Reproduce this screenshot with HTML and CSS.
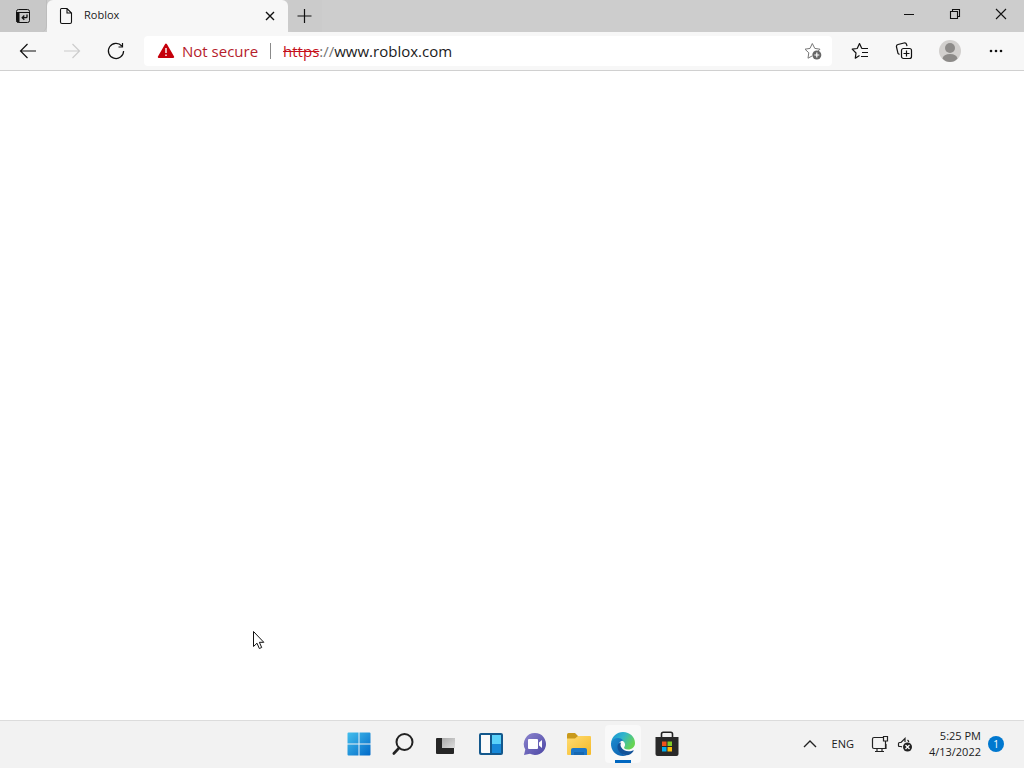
FILE: index.html
```html
<!DOCTYPE html>
<html lang="en">
<head>
<meta charset="utf-8">
<title>Roblox</title>
<link rel="stylesheet" href="styles.css">
</head>
<body>
<div class="desktop">
  <header class="titlebar">
    <button class="tab-actions" aria-label="Tab actions">
      <svg width="16" height="16" viewBox="0 0 16 16" fill="none" stroke="#111"><rect x="1.5" y="1.5" width="13" height="13" rx="2"/><path d="M1.500 4.500h13"/><path d="M2 5h2v9H2z" fill="#111"/><path d="M12 6.500v2.200q0 1-1 1H7.500M9.300 7.500 7.200 9.700l2.100 2" stroke-width="1.300"/></svg>
    </button>
    <div class="tab">
      <svg width="14" height="18" viewBox="0 0 14 18" fill="none" stroke="#111" stroke-width="1.100"><path d="M2.500 1.500h5.500l4.500 4.500v9q0 1.500-1.500 1.500H3q-1.500 0-1.500-1.500V3q0-1.500 1-1.500zM8 1.500V6h4.500"/></svg>
      <span class="tab-title">Roblox</span>
      <button class="tab-close" aria-label="Close tab"><svg width="10" height="10" viewBox="0 0 10 10" stroke="#111" stroke-width="1.400"><path d="M1 1l8 8M9 1 1 9"/></svg></button>
    </div>
    <button class="new-tab" aria-label="New tab"><svg width="16" height="16" viewBox="0 0 16 16" stroke="#111" stroke-width="1.200"><path d="M7.500 1v14M.5 8h14"/></svg></button>
    <div class="window-controls">
      <button aria-label="Minimize"><svg width="12" height="12" viewBox="0 0 12 12" stroke="#111"><path d="M1 6.500h10"/></svg></button>
      <button aria-label="Restore"><svg width="12" height="12" viewBox="0 0 12 12" fill="none" stroke="#111" stroke-width="1.100"><path d="M1.500 3.500h7v7h-7zM3.500 3.500v-2h7v7h-2"/></svg></button>
      <button aria-label="Close"><svg width="12" height="12" viewBox="0 0 12 12" stroke="#111" stroke-width="1.100"><path d="M1 1l10 10M11 1 1 11"/></svg></button>
    </div>
  </header>

  <nav class="toolbar" aria-label="Browser">
    <button class="tool" aria-label="Back"><svg width="20" height="20" viewBox="0 0 20 20" fill="none" stroke="#111" stroke-width="1.200"><path d="M18 10H2.500M9.500 3l-7 7 7 7"/></svg></button>
    <button class="tool" aria-label="Forward" disabled><svg width="20" height="20" viewBox="0 0 20 20" fill="none" stroke="#ccc" stroke-width="1.200"><path d="M2 10h15.500M10.500 3l7 7-7 7"/></svg></button>
    <button class="tool" aria-label="Refresh"><svg width="20" height="20" viewBox="0 0 20 20" fill="none" stroke="#111" stroke-width="1.200"><path d="M15.800 5A7.600 7.600 0 1 0 17.600 10M16.500 2v4h-4"/></svg></button>
    <div class="address">
      <button class="security"><svg width="18" height="16" viewBox="0 0 18 16"><path d="M9 1.500 16.200 14H1.800z" fill="#c5000b" stroke="#c5000b" stroke-width="2" stroke-linejoin="round"/><path d="M9 5v5M9 11.500v1.500" stroke="#fff" stroke-width="1.400"/></svg><span>Not secure</span></button>
      <span class="divider"></span>
      <label class="scheme" for="url"><s>https</s>://</label>
      <input id="url" class="url" type="text" value="www.roblox.com">
      <button class="favorite" aria-label="Add to favorites"><svg width="18" height="18" viewBox="0 0 18 18" fill="none" stroke="#777"><path d="M8 14 4 16.200l.8-5.400L1 7.200l5-.8L8.300 1.500l2.500 4.900 5.200.8-2 2" stroke-linejoin="round"/><circle cx="12.800" cy="13" r="4.500" fill="#666" stroke="none"/><path d="M12.800 10.500v5M10.300 13h5" stroke="#fff" stroke-width="1.200"/></svg></button>
    </div>
    <button class="tool" aria-label="Favorites"><svg width="18" height="18" viewBox="0 0 18 18" fill="none" stroke="#111" stroke-width="1.200"><path d="M8.500 13.500 4.300 16.200l.7-5.200L1.200 7.200l5-.7L8.500 1.500l2.200 4.700M10.500 6.500H17M11 10.500h6M10 14.500h7" stroke-linejoin="round"/></svg></button>
    <button class="tool" aria-label="Collections"><svg width="18" height="18" viewBox="0 0 18 18" fill="none" stroke="#111" stroke-width="1.200"><rect x="6.500" y="6.500" width="10" height="10" rx="2"/><path d="M11.500 8.500v6M8.500 11.500h6M4.500 12.500 3 11.500 1.500 5q-.4-2 1.500-2.500l6-1.500q2-.4 2.500 1.200l.5 2"/></svg></button>
    <button class="tool profile" aria-label="Profile"><svg width="22" height="22" viewBox="0 0 22 22"><circle cx="11" cy="11" r="11" fill="#d2d0ce"/><circle cx="11" cy="8" r="5" fill="#8d8b89"/><path d="M3.500 18.500q1-4.500 7.500-4.500t7.500 4.500Q15.500 22 11 22t-7.500-3.500" fill="#8d8b89"/></svg></button>
    <button class="tool menu" aria-label="Settings and more"><svg width="14" height="4" viewBox="0 0 14 4" fill="#111"><circle cx="2" cy="2" r="1.300"/><circle cx="7" cy="2" r="1.300"/><circle cx="12" cy="2" r="1.300"/></svg></button>
  </nav>

  <main class="page"></main>

  <footer class="taskbar">
    <div class="apps">
      <button class="app" aria-label="Start"><svg width="24" height="24" viewBox="0 0 24 24"><defs><linearGradient id="win" gradientUnits="userSpaceOnUse" x1="0" y1="0" x2="24" y2="24"><stop stop-color="#45c1ee"/><stop offset="1" stop-color="#0067c7"/></linearGradient></defs><path d="M1.500.5h10v11H.5v-10q0-1 1-1zM12.500.5h10q1 0 1 1v10h-11zM.5 12.500h11v11h-10q-1 0-1-1zM12.500 12.500h11v10q0 1-1 1h-10z" fill="url(#win)"/></svg></button>
      <button class="app" aria-label="Search"><svg width="24" height="24" viewBox="0 0 24 24" fill="none" stroke="#222"><circle cx="13.500" cy="10" r="8" stroke-width="2"/><path d="M8 16 2.800 21.500" stroke-width="2.600" stroke-linecap="round"/></svg></button>
      <button class="app" aria-label="Task view"><svg width="24" height="24" viewBox="0 0 24 24"><defs><linearGradient id="tv" x2="1" y2="1"><stop stop-color="#aaa"/><stop offset="1" stop-color="#ddd"/></linearGradient></defs><rect x="1" y="6" width="18" height="16" rx="1" fill="#262626"/><path d="M7 6h13v10H7z" fill="url(#tv)"/></svg></button>
      <button class="app" aria-label="Widgets"><svg width="24" height="24" viewBox="0 0 24 24"><rect width="24" height="22" y="1" rx="2" fill="#14588c"/><path d="M2 3h9v18H3q-1 0-1-1z" fill="#fafafa"/><path d="M13 3h9v9h-9z" fill="#5bd2fa"/><path d="M13 12h9v9h-9z" fill="#1788d8"/></svg></button>
      <button class="app" aria-label="Chat"><svg width="24" height="24" viewBox="0 0 24 24"><defs><linearGradient id="chat" x2="1" y2="1"><stop stop-color="#8d85ce"/><stop offset="1" stop-color="#4b46a4"/></linearGradient></defs><path d="M12 1a11 11 0 1 1-5 20.800L1 23l1.300-5.500A11 11 0 0 1 12 1z" fill="url(#chat)"/><rect x="5" y="7" width="10" height="10" rx="1" fill="#fff"/><path d="m16 10.500 3-2.500v8l-3-2.500z" fill="#fff"/></svg></button>
      <button class="app" aria-label="File Explorer"><svg width="24" height="24" viewBox="0 0 24 24"><defs><linearGradient id="fold" x2="1" y2="1"><stop stop-color="#ffdc72"/><stop offset="1" stop-color="#f5b927"/></linearGradient></defs><path d="M0 2.500Q0 1 1.500 1H8l3 3v3H0z" fill="#c99a1c"/><path d="M0 6.500h8L11 4h12q1 0 1 1v17q0 1-1 1H1q-1 0-1-1z" fill="url(#fold)"/><path d="M4 23v-5q0-2 2-2h12q2 0 2 2v5z" fill="#1c77c8"/><path d="M7 20h10v3H7z" fill="#1767b0"/></svg></button>
      <button class="app active" aria-label="Microsoft Edge"><svg width="26" height="26" viewBox="0 0 26 26"><defs><linearGradient id="edge" x2="1" y2=".5"><stop stop-color="#168fd4"/><stop offset=".5" stop-color="#31b5cb"/><stop offset="1" stop-color="#67d453"/></linearGradient><linearGradient id="wave" y2="1"><stop stop-color="#1c8cd0"/><stop offset="1" stop-color="#0b5cac"/></linearGradient></defs><path d="M1 12C2 5 7 1 13 1c7 0 12 5 12 11 0 4-3 6.500-7 6.500-3 0-4.500-1.200-3.800-2.300 1.400-2 1.100-4.200-.7-5.700C10 7.500 4 8 1 12z" fill="url(#edge)"/><path d="M1 12c1.500-5 8.500-7 12.500-2.500-4 .5-5.500 3.500-4.500 7 1 4 4 7.300 7.500 7.700-1 .6-2.200.8-3.500.8C5.500 25 .5 19 1 12z" fill="url(#wave)"/><path d="M11.200 11.500c-.8 1.200-1 3 0 4.700 2.300 4 7.300 5 11.600 3.200.8-.3 1 .2.600.8C21.500 23 18.500 24.500 16 24.200 10.500 23.500 7 19 7.500 15c.3-2.200 2-3.500 3.700-3.500z" fill="#125299"/></svg></button>
      <button class="app" aria-label="Microsoft Store"><svg width="24" height="26" viewBox="0 0 24 26"><path d="M6.500 7V3q0-1.800 1.800-1.800h7.400q1.800 0 1.800 1.800v4" fill="none" stroke="#222" stroke-width="1.600"/><path d="M.5 6h23v17q0 2-2 2h-19q-2 0-2-2z" fill="#292929"/><path d="M7 10.500h4.500V15H7z" fill="#f1511b"/><path d="M12.500 10.500H17V15h-4.500z" fill="#80cc28"/><path d="M7 16h4.500v4.500H7z" fill="#00adef"/><path d="M12.500 16H17v4.500h-4.500z" fill="#fbbc09"/></svg></button>
    </div>
    <div class="tray">
      <button aria-label="Show hidden icons"><svg width="14" height="10" viewBox="0 0 14 10" fill="none" stroke="#222" stroke-width="1.400"><path d="m1 8 6-6 6 6"/></svg></button>
      <button class="language">ENG</button>
      <button class="status" aria-label="Network and volume">
        <svg width="18" height="18" viewBox="0 0 18 18" fill="none" stroke="#222" stroke-width="1.200"><path d="M12 2.500H3Q1.500 2.500 1.500 4v8q0 1.500 1.500 1.500h12V9M6 13.500v3M11 13.500v3M4 16.500h9M12.500 1.500h4v4.500h-4zM14.500 6v7"/></svg>
        <svg width="16" height="16" viewBox="0 0 16 16" fill="none" stroke="#222" stroke-width="1.200"><path d="M5 11 4 10.500H2.500q-1 0-1-1v-2q0-1 1-1H4l4-4V6M10.500 4q1 .8 1.300 2"/><circle cx="10.500" cy="11" r="4.500" fill="#222" stroke="none"/><path d="m8.500 9 4 4M12.500 9l-4 4" stroke="#fff"/></svg>
      </button>
      <button class="clock"><time>5:25 PM<br>4/13/2022</time></button>
      <button class="badge" aria-label="1 notification">1</button>
    </div>
  </footer>
</div>
<svg class="cursor" width="13" height="20" viewBox="0 0 13 20"><path d="M1.500 1.500v15l3.500-3.300 2.300 5.300 2.400-1-2.300-5.200h4.400z" fill="#fff" stroke="#111"/></svg>
</body>
</html>
```
FILE: styles.css
```css
* { box-sizing: border-box; }
body { margin: 0; font-family: "Open Sans", "Noto Sans", sans-serif; font-size: 12px; color: #1b1b1b; }
button { display: flex; align-items: center; justify-content: center; padding: 0; border: 0; background: none; color: inherit; font: inherit; }
svg { display: block; flex: none; }
.desktop { display: flex; flex-direction: column; min-height: 100vh; background: #fff; }

.titlebar { display: flex; height: 32px; background: #cdcdcd; }
.tab-actions { width: 47px; border-right: 1px solid #bdbdbd; background: #c8c8c8; border-radius: 0 0 6px 0; }
.tab { display: flex; align-items: center; gap: 11px; width: 241px; padding: 0 12px 0 12px; background: #f7f7f7; border-radius: 6px 6px 0 0; }
.tab-title { flex: 1; font-size: 11px; line-height: 14px; padding-bottom: 2px; }
.tab-close { width: 12px; height: 20px; }
.new-tab { width: 34px; background: #cbcbcb; border-radius: 0 0 0 6px; }
.window-controls { display: flex; margin-left: auto; padding-bottom: 4px; }
.window-controls button { width: 46px; }

.toolbar { display: flex; align-items: center; height: 39px; padding: 0 6px; background: #f7f7f7; border-bottom: 1px solid #d0d0d0; }
.tool { width: 44px; height: 32px; }
.tool.profile, .tool.menu { margin-left: 2px; }
.address { display: flex; align-items: center; flex: 1; min-width: 0; height: 30px; margin: 0 6px; padding: 0 10px 0 13px; background: #fff; border-radius: 4px; font-size: 15px; }
.security { gap: 7px; color: #b5202b; }
.divider { width: 1px; height: 16px; margin: 0 12px; background: #8a8a8a; }
.scheme { color: #767676; }
.scheme s { color: #c5101b; }
.url { flex: 1; min-width: 0; padding: 0; border: 0; outline: 0; background: none; color: #1b1b1b; font: inherit; }

.page { flex: 1; }

.taskbar { display: grid; grid-template-columns: 1fr auto 1fr; align-items: center; height: 48px; padding-bottom: 2px; background: #f2f2f2; border-top: 1px solid #dcdcdc; }
.apps { display: flex; grid-column: 2; padding-left: 1px; }
.app { width: 44px; height: 38px; }
.app.active { width: 36px; margin: 0 4px; background: linear-gradient(#0067c0, #0067c0) center bottom / 16px 3px no-repeat, #f9f9f9; border-radius: 4px; }
.tray { display: flex; align-items: center; justify-content: flex-end; padding-right: 20px; font-size: 11px; }
.language { margin: 0 17px 0 15px; }
.status { gap: 8px; margin-right: 14px; }
.clock { width: 54px; margin-right: 7px; justify-content: flex-end; line-height: 16px; text-align: right; }
.badge { width: 16px; height: 16px; border-radius: 50%; background: #0078cf; color: #fff; font-size: 10px; }

.cursor { position: absolute; left: 252px; top: 630px; }
```
